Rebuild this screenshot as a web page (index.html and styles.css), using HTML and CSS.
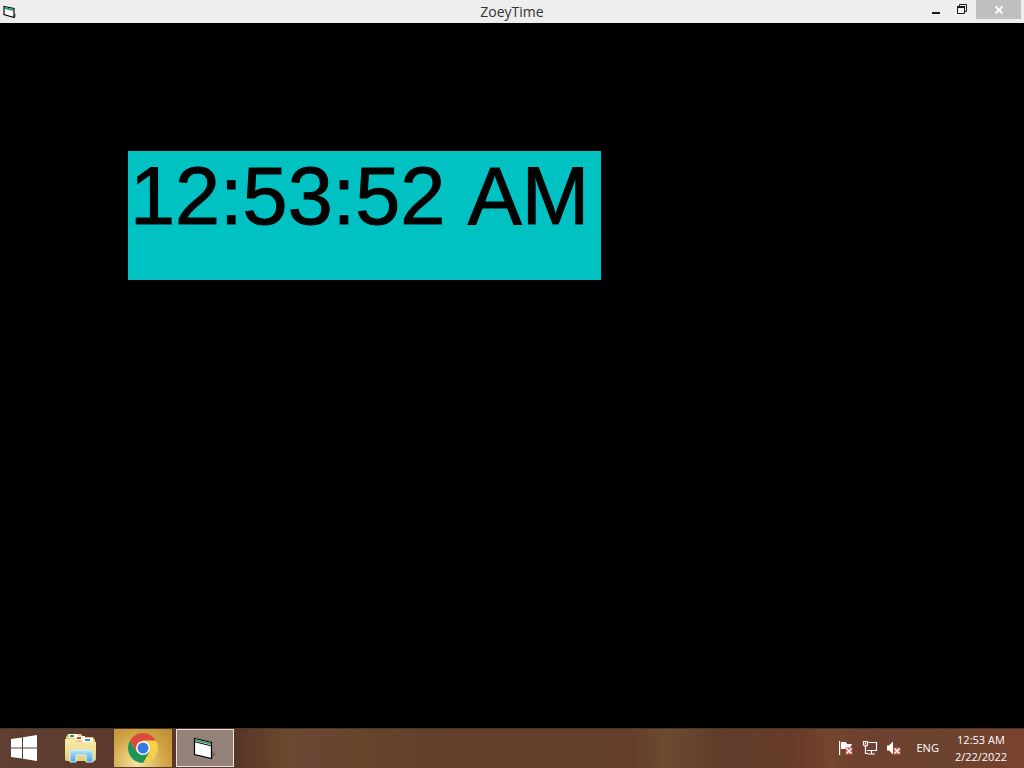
FILE: index.html
```html
<!DOCTYPE html>
<html lang="en">
<head>
<meta charset="utf-8">
<title>ZoeyTime</title>
<link rel="stylesheet" href="styles.css">
</head>
<body>
<header class="titlebar">
  <svg class="app-icon" width="16" height="16" viewBox="0 0 16 16" aria-hidden="true">
    <path d="M13 10l5 2-4 3z" fill="#999"/>
    <path d="M4 3.500l10 2v9l-10-3z" fill="#fff" stroke="#000" stroke-width="1.200"/>
    <path d="M4.500 5l9 2" stroke="#2f9a78" stroke-width="1.800"/>
  </svg>
  <h1 class="title">ZoeyTime</h1>
  <div class="window-controls">
    <button class="control" type="button" aria-label="Minimize">
      <svg width="12" height="12" viewBox="0 0 12 12"><path d="M1 8h8v2H1z" fill="#1c1c1c"/></svg>
    </button>
    <button class="control" type="button" aria-label="Restore">
      <svg width="12" height="12" viewBox="0 0 12 12" fill="none" stroke="#1c1c1c"><path d="M2.500 2V.5h7v7H8"/><path d="M.5 3v6.500h7V3"/><path d="M0 3h8" stroke-width="2"/></svg>
    </button>
    <button class="control close" type="button" aria-label="Close">
      <svg width="12" height="12" viewBox="0 0 12 12" stroke="#fff" stroke-width="1.800"><path d="M2.500 2.500l7 7M9.500 2.500l-7 7"/></svg>
    </button>
  </div>
</header>
<main class="form">
  <time class="clock" datetime="00:53:52">12:53:52 AM</time>
</main>
<footer class="taskbar">
  <button class="task start" type="button" aria-label="Start">
    <svg width="26" height="26" viewBox="0 0 26 26" fill="#fff"><path d="M0 4l11-1.600V12.500H0zM12 2.200L26 0v12.500H12zM0 13.500h11v10L0 22zM12 13.500h14V26l-14-2.200z"/></svg>
  </button>
  <button class="task" type="button" aria-label="File Explorer">
    <svg width="34" height="32" viewBox="0 0 34 32">
      <defs>
        <linearGradient id="folder" x1="0" y1="0" x2="0" y2="1"><stop offset="0" stop-color="#f8edab"/><stop offset="1" stop-color="#e3cf75"/></linearGradient>
        <linearGradient id="stand" x1="0" y1="0" x2="0" y2="1"><stop offset="0" stop-color="#b8e3f5"/><stop offset="1" stop-color="#4da3d8"/></linearGradient>
      </defs>
      <path d="M2 5l2-3h13l2 3h10l2 3v18H2z" fill="#e6ce7c"/>
      <path d="M5 2h9v4H5z" fill="#fffdf0"/><path d="M6 3h4v2H6z" fill="#3a9a54"/>
      <path d="M11 4h10v4H11z" fill="#fffdf0"/><path d="M13 5h4v2h-4z" fill="#d6472f"/>
      <path d="M18 6h11v4H18z" fill="#fffdf0"/><path d="M21 7h5v2h-5z" fill="#4a91c6"/>
      <path d="M1 7h10l2 3h19v17q0 2-2 2H3q-2 0-2-2z" fill="url(#folder)"/>
      <path d="M6 30V20q0-2 3-2h16q4 0 4 2v10h-7v-7H12v7z" fill="url(#stand)" stroke="#d9f1fb"/>
    </svg>
  </button>
  <button class="task chrome" type="button" aria-label="Google Chrome">
    <svg width="30" height="30" viewBox="0 0 30 30">
      <path d="M15 15L2.010 7.500A15 15 0 0 1 27.990 7.500z" fill="#db4a3a"/>
      <path d="M15 15V7.500h12.990A15 15 0 0 1 15 30z" fill="#f8d048"/>
      <path d="M2.010 7.500A15 15 0 0 0 15 30l6.500-11.250L15 15 8.500 18.750z" fill="#21945a"/>
      <path d="M2.010 7.500l6.500 11.250L15 15V7.500z" fill="#db4a3a"/>
      <circle cx="15" cy="15" r="7" fill="#fff"/><circle cx="15" cy="15" r="5.500" fill="#3979df"/>
    </svg>
  </button>
  <button class="task active" type="button" aria-label="ZoeyTime">
    <svg width="24" height="24" viewBox="0 0 24 24">
      <path d="M18 15l5 3-4 4z" fill="#756860"/>
      <path d="M1.500 2.500l17 4v16l-17-4z" fill="#fff" stroke="#000" stroke-width="1.200"/>
      <path d="M2 4l16 4" stroke="#2b9d76" stroke-width="1.600"/>
      <path d="M2 5.800l16 4" stroke="#000"/>
    </svg>
  </button>
  <div class="tray">
    <svg width="16" height="16" viewBox="0 0 16 16" role="img" aria-label="Action Center">
      <path d="M1 1h1.200v14H1zM3 2h5l1 2h5l-1.500 3L14 9H3z" fill="#fff"/>
      <path d="M7.500 7.500h7v7h-7z" fill="#d9534f"/><path d="M8.500 8.500l5 5M13.500 8.500l-5 5" stroke="#fff" stroke-width="1.500"/>
    </svg>
    <svg width="16" height="16" viewBox="0 0 16 16" role="img" aria-label="Network" fill="none" stroke="#fff" stroke-width="1.200">
      <path d="M6.500 2.500h8v8H5M9.500 11v3M6 14h7"/><path d="M1.500 1.500h4V5l-2 1.500L1.500 5zM3.500 6v7.500H6M3.500 2.500v2"/>
    </svg>
    <svg width="16" height="16" viewBox="0 0 16 16" role="img" aria-label="Volume muted">
      <path d="M1 5.500h2L7 1.500v13L3 10.500H1z" fill="#fff"/>
      <path d="M7.500 7.500h7v7h-7z" fill="#d9534f"/><path d="M8.500 8.500l5 5M13.500 8.500l-5 5" stroke="#fff" stroke-width="1.500"/>
    </svg>
  </div>
  <button class="language" type="button">ENG</button>
  <div class="datetime"><time>12:53 AM</time><time>2/22/2022</time></div>
</footer>
</body>
</html>
```
FILE: styles.css
```css
* { box-sizing: border-box; }
body {
  margin: 0;
  min-height: 100vh;
  display: flex;
  flex-direction: column;
  background: #000;
  font-family: "Open Sans", "Noto Sans", sans-serif;
}
button {
  display: flex;
  align-items: center;
  justify-content: center;
  margin: 0;
  padding: 0;
  border: 0;
  background: none;
  font: inherit;
  color: inherit;
}
.titlebar {
  display: grid;
  grid-template-columns: 1fr auto 1fr;
  height: 23px;
  background: #eeeeee;
}
.app-icon { margin-top: 3px; }
.title {
  margin: 0;
  font-size: 14px;
  line-height: 24px;
  font-weight: 400;
  color: #333;
}
.window-controls {
  display: flex;
  justify-content: flex-end;
  align-items: flex-start;
  padding-right: 3px;
}
.control { width: 26px; height: 19px; }
.close { width: 45px; background: #bfbfbf; }
.form {
  flex: 1;
  padding: 128px;
}
.clock {
  display: inline-block;
  padding: 0 12px 39px 2px;
  background: #00c2c2;
  color: #000;
  font-family: "Liberation Sans", Arial, sans-serif;
  font-size: 81px;
  font-kerning: none;
  line-height: 90px;
  -webkit-text-stroke: 1px #000;
  white-space: nowrap;
}
.taskbar {
  display: flex;
  align-items: center;
  height: 40px;
  padding: 0 17px 1px 0;
  color: #fff;
  border-top: 1px solid #49352a;
  background: linear-gradient(90deg, #5e3f31 0%, #573527 23%, #694a2f 28%, #6b4534 30%, #67462d 34%, #623f2b 42%, #653f2b 62%, #6c4b31 65%, #603e2b 70%, #683b2b 78%, #74462e 81%, #6d4030 84%, #6b432e 92%, #7a4230 100%);
}
.task { width: 58px; height: 38px; margin-right: 4px; }
.start { width: 48px; }
.chrome { background: radial-gradient(circle at 40% 90%, #f5e5a0, #d0a344 60%, #b98b34); }
.active { border: 1px solid #eee3dc; background: #94827a; }
.tray {
  display: flex;
  gap: 8px;
  margin-left: auto;
}
.language {
  margin-left: 14px;
  font-size: 11px;
  line-height: 16px;
}
.datetime {
  display: flex;
  flex-direction: column;
  margin-left: 16px;
  text-align: center;
  font-size: 11px;
  line-height: 17px;
}
```
